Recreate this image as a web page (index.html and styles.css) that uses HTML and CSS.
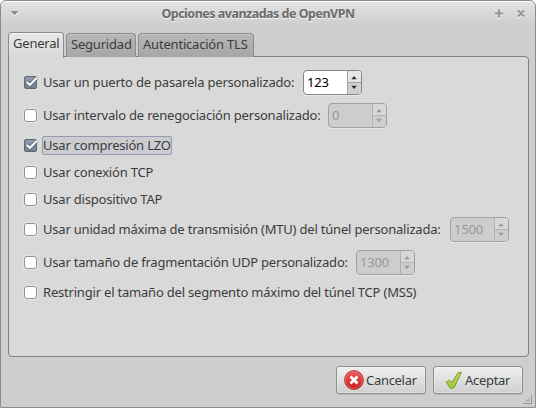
FILE: index.html
```html
<!DOCTYPE html>
<html lang="es">
<head>
<meta charset="utf-8">
<title>Opciones avanzadas de OpenVPN</title>
<link rel="stylesheet" href="styles.css">
</head>
<body>
<svg class="defs" width="0" height="0">
  <defs>
    <linearGradient id="box" x1="0" y1="0" x2="0" y2="1"><stop offset="0" stop-color="#929cac"/><stop offset="1" stop-color="#747f92"/></linearGradient>
    <linearGradient id="red" x1="0" y1="0" x2="0" y2="1"><stop offset="0" stop-color="#ee5b5b"/><stop offset="1" stop-color="#c51d1f"/></linearGradient>
    <linearGradient id="green" x1="0" y1="0" x2="0" y2="1"><stop offset="0" stop-color="#c5df68"/><stop offset="1" stop-color="#9fc82c"/></linearGradient>
    <symbol id="checked" viewBox="0 0 16 15">
      <rect x="1.5" y="1.5" width="12" height="12" rx="1.5" fill="url(#box)" stroke="#5d6675"/>
      <path d="M3.8 7 6.8 10 13.4 3.2" fill="none" stroke="#56606f" stroke-width="3.8"/>
      <path d="M3.8 7 6.8 10 13.6 3" fill="none" stroke="#fff" stroke-width="2.2"/>
    </symbol>
    <symbol id="arrows" viewBox="0 0 14 23">
      <path d="M3.5 8h6L6.5 4.5zM3.5 15h6l-3 3.5z" fill="currentColor"/>
    </symbol>
  </defs>
</svg>
<div class="window">
  <header class="titlebar">
    <svg class="menu" width="9" height="6" viewBox="0 0 9 6"><path d="M.5 1.5h8l-4 4z" fill="#fff"/><path d="M.5 0h8l-4 4.5z" fill="#8e8e8e"/></svg>
    <h1>Opciones avanzadas de OpenVPN</h1>
    <svg class="controls" width="32" height="10" viewBox="0 0 32 10">
      <path d="M1 5.5h8M5 2v8M24 2.5l6 6M30 2.5l-6 6" stroke="#f4f4f4" stroke-width="2" fill="none"/>
      <path d="M1 4.5h8M5 .5v8M24 1.5l6 6M30 1.5l-6 6" stroke="#959595" stroke-width="2" fill="none"/>
    </svg>
  </header>
  <nav class="tabs">
    <div class="tab active"><span>General</span></div>
    <div class="tab seg"><span>Seguridad</span></div>
    <div class="tab tls"><span>Autenticación TLS</span></div>
  </nav>
  <main class="panel">
    <div class="row tall"><svg class="check"><use href="#checked"/></svg><label class="w1">Usar un puerto de pasarela personalizado:</label><div class="spin"><span class="value">123</span><svg class="step"><use href="#arrows"/></svg></div></div>
    <div class="row tall"><i class="box"></i><label class="w2">Usar intervalo de renegociación personalizado:</label><div class="spin off"><span class="value">0</span><svg class="step"><use href="#arrows"/></svg></div></div>
    <div class="row"><svg class="check"><use href="#checked"/></svg><label class="focus">Usar compresión LZO</label></div>
    <div class="row"><i class="box"></i><label>Usar conexión TCP</label></div>
    <div class="row"><i class="box"></i><label>Usar dispositivo TAP</label></div>
    <div class="row tall"><i class="box"></i><label class="w3">Usar unidad máxima de transmisión (MTU) del túnel personalizada:</label><div class="spin off"><span class="value">1500</span><svg class="step"><use href="#arrows"/></svg></div></div>
    <div class="row tall"><i class="box"></i><label class="w4">Usar tamaño de fragmentación UDP personalizado:</label><div class="spin off"><span class="value">1300</span><svg class="step"><use href="#arrows"/></svg></div></div>
    <div class="row"><i class="box"></i><label>Restringir el tamaño del segmento máximo del túnel TCP (MSS)</label></div>
  </main>
  <footer class="actions">
    <button class="cancel"><svg width="20" height="20" viewBox="0 0 20 20"><circle cx="10" cy="10" r="9.4" fill="url(#red)" stroke="#b53434"/><circle cx="10" cy="10" r="8.3" fill="none" stroke="#ee8080" stroke-opacity=".6"/><path d="m6.5 6.5 7 7m0-7-7 7" stroke="#fff" stroke-width="2.8"/></svg><span>Cancelar</span></button>
    <button class="accept"><svg width="18" height="19" viewBox="0 0 18 19"><path d="M1.2 11.2 4.6 9.2l2.4 2.6L12.8 2l3.6-.6L9 16.6l-3.2 1z" fill="url(#green)" stroke="#6e9a2c" stroke-linejoin="round"/></svg><span>Aceptar</span></button>
  </footer>
  <svg class="grip" width="9" height="9" viewBox="0 0 9 9"><path d="M0 8.5h8.5V0" fill="none" stroke="#999"/><path d="M2.5 6.5h4v-4z" fill="#aaa"/></svg>
</div>
</body>
</html>
```
FILE: styles.css
```css
* { box-sizing: border-box; }
body {
  margin: 0;
  width: 536px;
  height: 408px;
  overflow: hidden;
  background: #fff;
  font: 13px/18px "Noto Sans", "Open Sans", sans-serif;
  letter-spacing: -0.2px;
  color: #3c3c3c;
}
.defs { position: absolute; }
.window {
  position: relative;
  width: 536px;
  height: 408px;
  display: flex;
  flex-direction: column;
  padding: 0 7px;
  border: 1px solid #8c8c8c;
  border-radius: 6px 6px 0 0;
  background: linear-gradient(#e4e4e4, #cecece 24px);
  box-shadow: inset 0 1px #fff;
}
.titlebar {
  height: 30px;
  display: flex;
  align-items: center;
  padding: 0 2px 4px;
}
.menu { width: 9px; margin-right: 18px; }
h1 {
  flex: 1;
  margin: 0;
  padding-right: 15px;
  font-size: 12.5px;
  line-height: 18px;
  letter-spacing: -0.5px;
  text-align: center;
  color: #6b6b6b;
  text-shadow: 0 1px #f5f5f5;
  white-space: nowrap;
}
.tabs {
  height: 26px;
  display: flex;
  align-items: flex-end;
  gap: 2px;
  z-index: 1;
}
.tab {
  height: 24px;
  border: 1px solid #8a8a8a;
  border-bottom: 0;
  border-radius: 4px 4px 0 0;
  background: linear-gradient(#b8b8b8, #a6a6a6);
  box-shadow: inset 0 1px #c4c4c4;
  padding: 1px 0 0 4px;
  white-space: nowrap;
}
.tab.active {
  width: 56px;
  height: 26px;
  margin-bottom: -1px;
  background: linear-gradient(#e8e8e8, #d9d9d9);
  box-shadow: inset 0 1px #f5f5f5;
}
.tab.seg { width: 70px; }
.tab.tls { width: 116px; }
.panel {
  width: 521px;
  height: 301px;
  margin-top: -1px;
  display: flex;
  flex-direction: column;
  gap: 6px;
  padding: 12px 15px;
  border: 1px solid #808080;
  border-radius: 0 4px 4px 4px;
  background: #d9d9d9;
}
.row { height: 21px; display: flex; align-items: center; }
.row.tall { height: 27px; }
.box {
  width: 13px;
  height: 13px;
  border: 1px solid #929292;
  border-radius: 3px;
  background: #fff;
  box-shadow: 0 0 0 1px #e4e4e4;
  margin-right: 3px;
}
.check { width: 16px; height: 15px; margin: 0 1px 0 -1px; }
label {
  height: 18px;
  padding-left: 3px;
  line-height: 16px;
  white-space: nowrap;
}
.focus {
  width: 130px;
  height: 19px;
  border: 1px solid #939cb3;
  border-radius: 2px;
  background: #cbcbd0;
  line-height: 16px;
  margin-left: 2px;
  padding: 0;
}
.w1 { width: 263px; }
.w2 { width: 288px; }
.w3 { width: 410px; }
.w4 { width: 316px; }
.spin {
  width: 59px;
  height: 25px;
  display: flex;
  border: 1px solid #858585;
  border-radius: 4px;
  background: #fff;
  box-shadow: 0 1px #e9e9e9;
  color: #000;
  overflow: hidden;
}
.value { flex: 1; padding: 2px 0 0 3px; line-height: 18px; }
.step {
  width: 14px;
  height: 23px;
  background: linear-gradient(#e6e6e6 11px, #a0a0a0 11px, #a0a0a0 12px, #d0d0d0 12px);
  border-left: 1px solid #a0a0a0;
  color: #2e2e2e;
}
.spin.off { background: #cdcdcd; border-color: #a0a0a0; color: #989898; }
.off .step {
  background: linear-gradient(#d8d8d8 11px, #b2b2b2 11px, #b2b2b2 12px, #cecece 12px);
  border-color: #b2b2b2;
  color: #999;
}
.actions {
  display: flex;
  justify-content: flex-end;
  gap: 7px;
  padding: 9px 5px 0 0;
}
button {
  width: 90px;
  height: 28px;
  display: flex;
  align-items: center;
  padding: 0;
  border: 1px solid #8e8e8e;
  border-radius: 3px;
  background: linear-gradient(#efefef, #d0d0d0);
  box-shadow: inset 0 0 0 1px #f4f4f466, 0 1px #bbb;
  font: inherit;
  letter-spacing: -0.3px;
  color: inherit;
}
button span { padding-bottom: 1px; }
.cancel { padding-left: 7px; gap: 2px; }
.accept { padding-left: 11px; gap: 2px; }
.grip { position: absolute; right: 3px; bottom: 3px; }
```
